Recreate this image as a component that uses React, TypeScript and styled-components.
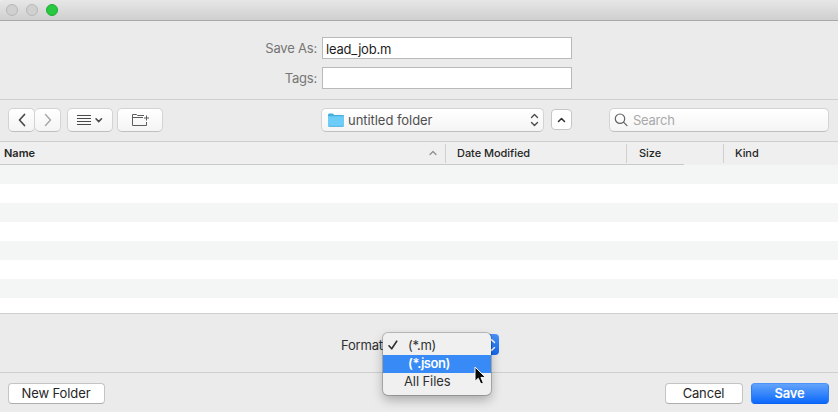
import React from "react";
import styled, { createGlobalStyle, css } from "styled-components";

const GlobalStyle = createGlobalStyle`
  * { box-sizing: border-box; }
  html, body { margin: 0; padding: 0; overflow: hidden; }
  body {
    font-family: Inter, "Liberation Sans", sans-serif;
    font-size: 13px;
    letter-spacing: -0.25px;
    color: #262626;
  }
`;

const Dialog = styled.div`
  width: 838px;
  height: 412px;
  display: flex;
  flex-direction: column;
  background: #ebebeb;
  overflow: hidden;
`;

const TitleBar = styled.header`
  height: 21px;
  flex: none;
  display: flex;
  align-items: center;
  gap: 8px;
  padding: 0 0 1px 6px;
  background: linear-gradient(#e7e7e7, #cfcfcf);
  border-bottom: 1px solid #a9a9a9;
  border-top-left-radius: 4px;
`;

const WindowDot = styled.span<{ $active?: boolean }>`
  width: 12px;
  height: 12px;
  border-radius: 50%;
  background: ${(p) => (p.$active ? "#28c840" : "#d0d0d0")};
  border: 1px solid ${(p) => (p.$active ? "#1fae31" : "#b7b7b7")};
`;

const NameForm = styled.section`
  height: 79px;
  flex: none;
  display: flex;
  flex-direction: column;
  gap: 8px;
  padding: 16px 0 0 250px;
  border-bottom: 1px solid #cfcfcf;
`;

const FieldRow = styled.label`
  display: flex;
  align-items: center;
  height: 22px;
`;

const FieldLabel = styled.span`
  width: 67px;
  margin-right: 5px;
  text-align: right;
  color: #767676;
  letter-spacing: -0.2px;
  white-space: nowrap;
`;

const TextField = styled.input`
  width: 250px;
  height: 22px;
  padding: 2px 3px 0;
  border: 1px solid #b9b9b9;
  border-radius: 0;
  outline: none;
  background: #fff;
  font: inherit;
  letter-spacing: -0.22px;
  color: #1d1d1d;
`;

const Toolbar = styled.nav`
  height: 42px;
  flex: none;
  display: flex;
  align-items: flex-start;
  padding: 8px 9px 0 8px;
  border-bottom: 1px solid #cfcfcf;
`;

const raised = css`
  border: 1px solid #d3d3d3;
  border-bottom-color: #bfbfbf;
  border-radius: 5px;
  background: linear-gradient(#ffffff, #f4f4f4);
  display: flex;
  align-items: center;
`;

const ToolButton = styled.button<{ $width: number; $joined?: boolean; $gap?: number }>`
  ${raised}
  width: ${(p) => p.$width}px;
  height: 24px;
  padding: 0;
  margin-left: ${(p) => p.$gap ?? 0}px;
  justify-content: center;
  ${(p) => p.$joined && "border-left: none;"}
`;

const FolderSelect = styled.div`
  ${raised}
  width: 223px;
  height: 24px;
  margin-left: 158px;
  padding: 0 4px 0 6px;
  color: #4f4f4f;
  letter-spacing: -0.05px;
`;

const FolderName = styled.span`
  flex: 1;
  margin-left: 4px;
`;

const CollapseButton = styled.button`
  width: 21px;
  height: 21px;
  margin: 1px 0 0 7px;
  padding: 0;
  display: flex;
  align-items: center;
  justify-content: center;
  background: #fff;
  border: 1px solid #c6c6c6;
  border-radius: 4px;
`;

const SearchBox = styled.div`
  ${raised}
  width: 220px;
  height: 24px;
  margin-left: auto;
  padding-left: 4px;
  color: #a9a9a9;
  gap: 5px;
`;

const ColumnHeader = styled.div`
  height: 23px;
  flex: none;
  display: flex;
  align-items: center;
  background:
    linear-gradient(#c9c9c9, #c9c9c9) left bottom / 684px 1px no-repeat,
    #efefef;
`;

const Column = styled.div<{ $width: number; $inset: number; $last?: boolean; $bold?: boolean }>`
  width: ${(p) => p.$width}px;
  height: 19px;
  padding: 0 8px 2px ${(p) => p.$inset}px;
  display: flex;
  align-items: center;
  justify-content: space-between;
  border-right: ${(p) => (p.$last ? "none" : "1px solid #d0d0d0")};
  font-size: 11px;
  font-weight: ${(p) => (p.$bold ? 600 : 500)};
  letter-spacing: ${(p) => (p.$bold ? 0 : -0.05)}px;
`;

const FileList = styled.div`
  height: 148px;
  flex: none;
  background: repeating-linear-gradient(#f4f5f5 0 19px, #ffffff 19px 38px);
`;

const FormatArea = styled.section`
  height: 60px;
  flex: none;
  display: flex;
  align-items: center;
  padding: 3px 0 0 341px;
  border-top: 1px solid #cfcfcf;
  border-bottom: 1px solid #cfcfcf;
`;

const FormatLabel = styled.span`
  width: 44px;
  color: #303030;
  letter-spacing: -0.2px;
`;

const FormatSelect = styled.div`
  position: relative;
  width: 114px;
  height: 21px;
  display: flex;
  justify-content: flex-end;
  align-items: center;
  padding-right: 3px;
  border-radius: 4px;
  background: linear-gradient(#4b92f7, #1468f4);
`;

const Menu = styled.ul`
  position: absolute;
  left: -2px;
  top: -1px;
  width: 108px;
  height: 62px;
  margin: 0;
  padding: 4px 0 0;
  list-style: none;
  background: #f0f0f0;
  border-radius: 5px;
  box-shadow: 0 0 0 1px rgba(0, 0, 0, 0.2), 0 5px 11px rgba(0, 0, 0, 0.28);
`;

const MenuItem = styled.li<{ $selected?: boolean; $inset: number; $tracking: number }>`
  display: flex;
  align-items: center;
  height: 18px;
  padding: 0 0 2px ${(p) => p.$inset}px;
  background: ${(p) => (p.$selected ? "#388af7" : "transparent")};
  color: ${(p) => (p.$selected ? "#fff" : "#303030")};
  font-weight: ${(p) => (p.$selected ? 600 : 400)};
  letter-spacing: ${(p) => p.$tracking}px;
`;

const CheckSlot = styled.span`
  width: 20px;
  display: flex;
`;

const Pointer = styled.svg`
  position: absolute;
  left: 89px;
  top: 32px;
`;

const Footer = styled.footer`
  flex: 1;
  display: flex;
  align-items: flex-start;
  gap: 8px;
  padding: 10px 9px 0 8px;
`;

const PushButton = styled.button<{ $width: number; $primary?: boolean; $tracking?: number }>`
  width: ${(p) => p.$width}px;
  height: 21px;
  padding: 0 1px 1px 0;
  font: inherit;
  line-height: 18px;
  letter-spacing: ${(p) => p.$tracking ?? 0}px;
  color: #262626;
  background: #fff;
  border: 1px solid #c4c4c4;
  border-bottom-color: #adadad;
  border-radius: 4px;
  ${(p) =>
    p.$primary &&
    css`
      color: #fff;
      font-weight: 600;
      border-color: #4d92f8 #2f7df7 #0b62f0;
      background: linear-gradient(#63a3fb, #0c69fb);
    `}
`;

const Spacer = styled.span`
  flex: 1;
`;

type ChevronProps = { d: string; w: number; h: number; color?: string; stroke?: number };

const Chevron = ({ d, w, h, color = "#4a4a4a", stroke = 1.5 }: ChevronProps) => (
  <svg width={w} height={h} viewBox={`0 0 ${w} ${h}`} fill="none" stroke={color} strokeWidth={stroke} strokeLinecap="round" strokeLinejoin="round">
    <path d={d} />
  </svg>
);

export default function App() {
  return (
    <>
      <GlobalStyle />
      <Dialog>
        <TitleBar>
          <WindowDot />
          <WindowDot />
          <WindowDot $active />
        </TitleBar>

        <NameForm>
          <FieldRow>
            <FieldLabel>Save As:</FieldLabel>
            <TextField defaultValue="lead_job.m" />
          </FieldRow>
          <FieldRow>
            <FieldLabel>Tags:</FieldLabel>
            <TextField />
          </FieldRow>
        </NameForm>

        <Toolbar>
          <ToolButton $width={27}>
            <Chevron w={8} h={14} d="M6.5 1.5 1.5 7l5 5.5" stroke={1.7} />
          </ToolButton>
          <ToolButton $width={26} $joined>
            <Chevron w={8} h={14} d="M1.5 1.5 6.5 7l-5 5.5" color="#a8a8a8" />
          </ToolButton>
          <ToolButton $width={46} $gap={6}>
            <svg width="26" height="12" viewBox="0 0 26 12" fill="none" stroke="#4a4a4a">
              <path d="M0 1.5h14M0 4.5h14M0 7.5h14M0 10.5h14" />
              <path d="m19 4.8 2.7 2.8 2.8-2.8" strokeWidth="1.6" strokeLinecap="round" />
            </svg>
          </ToolButton>
          <ToolButton $width={46} $gap={4}>
            <svg width="18" height="14" viewBox="0 0 18 14" fill="none" stroke="#5c5c5c">
              <path d="M13 2.5H6.5L5.500 1.5H1.5v11h14V9M1.5 4.5h10.500M15.500 2.500v5M13 5h5" />
            </svg>
          </ToolButton>
          <FolderSelect>
            <svg width="16" height="14" viewBox="0 0 16 14">
              <path d="M0 2Q0 .5 1.2 .5h3.6L6.2 2H15q1 0 1 1v10H0Z" fill="#46aedb" />
              <path d="M0 3.2h16v9.6q0 .7-.8 .7H.8Q0 13.5 0 12.8Z" fill="#6dcdf8" />
              <path d="M.5 13.3h15" stroke="#4fb2df" />
            </svg>
            <FolderName>untitled folder</FolderName>
            <Chevron w={9} h={14} d="m1.5 4.5 3-3 3 3m-6 5 3 3 3-3" stroke={1.4} />
          </FolderSelect>
          <CollapseButton>
            <Chevron w={9} h={6} d="m1.5 4.5 3-3 3 3" color="#303030" />
          </CollapseButton>
          <SearchBox>
            <svg width="14" height="14" viewBox="0 0 14 14" fill="none" stroke="#626262" strokeWidth="1.2" strokeLinecap="round">
              <circle cx="6" cy="5.7" r="4.7" />
              <path d="m9.5 9.2 3.5 3.5" />
            </svg>
            <span>Search</span>
          </SearchBox>
        </Toolbar>

        <ColumnHeader>
          <Column $width={446} $inset={4} $bold>
            Name
            <Chevron w={8} h={6} d="m1 4.5 3-3 3 3" color="#8c8c8c" stroke={1.2} />
          </Column>
          <Column $width={181} $inset={11}>Date Modified</Column>
          <Column $width={97} $inset={12}>Size</Column>
          <Column $width={114} $inset={11} $last>Kind</Column>
        </ColumnHeader>

        <FileList />

        <FormatArea>
          <FormatLabel>Format:</FormatLabel>
          <FormatSelect>
            <Chevron w={9} h={14} d="m1.5 4.5 3-3 3 3m-6 5 3 3 3-3" color="#fff" />
            <Menu>
              <MenuItem $inset={5} $tracking={-0.25}>
                <CheckSlot>
                  <svg width="10" height="10" viewBox="0 0 10 10" fill="none" stroke="#303030" strokeWidth="1.6" strokeLinecap="round" strokeLinejoin="round">
                    <path d="m1 5.8 2.7 3 5-7.6" />
                  </svg>
                </CheckSlot>
                (*.m)
              </MenuItem>
              <MenuItem $selected $inset={25} $tracking={-0.45}>(*.json)</MenuItem>
              <MenuItem $inset={21} $tracking={-0.1}>All Files</MenuItem>
            </Menu>
            <Pointer width="13" height="19" viewBox="0 0 13 19">
              <path d="M1 1v14.300l3.300-3 2.500 5.700 2.600-1.100-2.500-5.500h4.700Z" fill="#080808" stroke="#fff" />
            </Pointer>
          </FormatSelect>
        </FormatArea>

        <Footer>
          <PushButton $width={97} $tracking={-0.1}>New Folder</PushButton>
          <Spacer />
          <PushButton $width={78} $tracking={-0.15}>Cancel</PushButton>
          <PushButton $width={78} $primary $tracking={-0.25}>Save</PushButton>
        </Footer>
      </Dialog>
    </>
  );
}
